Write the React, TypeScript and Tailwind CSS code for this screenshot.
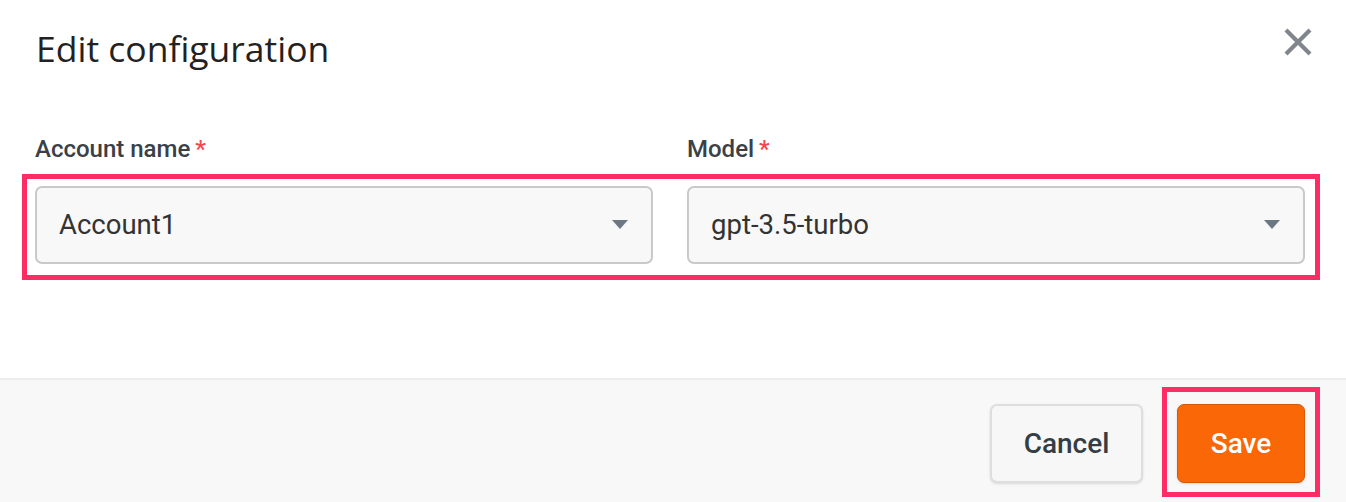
function Caret() {
  return (
    <svg width="16" height="9" viewBox="0 0 16 9" className="shrink-0">
      <path d="M0 0 L16 0 L8 9 Z" fill="#6b7883" />
    </svg>
  );
}

function CloseIcon() {
  return (
    <svg width="28" height="28" viewBox="0 0 28 28" className="shrink-0">
      <path
        d="M2 2 L26 26 M26 2 L2 26"
        stroke="#80868b"
        strokeWidth="4.2"
        strokeLinecap="butt"
      />
    </svg>
  );
}

function SelectBox({ value }: { value: string }) {
  return (
    <div className="flex h-[78px] items-center justify-between rounded-[7px] border-2 border-[#c9c9c9] bg-[#f8f8f8] pl-[22px] pr-[23px]">
      <span className="text-[27.5px] text-[#333333]">{value}</span>
      <Caret />
    </div>
  );
}

export default function App() {
  return (
    <div
      className="flex h-[502px] w-full flex-col bg-white"
      style={{ fontFamily: "Roboto, 'Liberation Sans', sans-serif" }}
    >
      {/* header */}
      <div className="flex items-start justify-between pl-[36px] pr-[34px] pt-[31px]">
        <h1
          className="text-[35.5px] leading-none text-[#222222]"
          style={{ fontFamily: "'Open Sans', 'Noto Sans', sans-serif" }}
        >
          Edit configuration
        </h1>
        <div className="-mt-[3px]">
          <CloseIcon />
        </div>
      </div>

      {/* body */}
      <div className="pl-[22px] pr-[26px] pt-[70px]">
        <div className="grid grid-cols-2 gap-[34px] pl-[13px] pr-[15px]">
          <label className="text-[24px] font-medium leading-none text-[#3a4047]">
            Account name<span className="ml-[5px] text-[#f4474d]">*</span>
          </label>
          <label className="text-[24px] font-medium leading-none text-[#3a4047]">
            Model<span className="ml-[5px] text-[#f4474d]">*</span>
          </label>
        </div>
        <div className="mt-[13px] grid grid-cols-2 gap-[34px] border-[5px] border-[#fe2c64] pb-[11px] pl-[8px] pr-[10px] pt-[7px]">
          <SelectBox value="Account1" />
          <SelectBox value="gpt-3.5-turbo" />
        </div>
      </div>

      {/* footer */}
      <div className="mt-auto flex h-[124px] items-start justify-end gap-[19px] border-t-2 border-[#ececec] bg-[#f8f8f8] pr-[26px] pt-[7px]">
        <button className="mt-[17px] h-[79px] w-[153px] rounded-[7px] border-2 border-[#dedede] bg-[#f7f7f7] text-[28px] font-medium text-[#343d45] shadow-sm">
          Cancel
        </button>
        <div className="border-[5px] border-[#fe2c64] px-[10px] pb-[9px] pt-[12px]">
          <button className="h-[79px] w-[128px] rounded-[7px] border border-[#d35a0c] bg-[#f96706] text-[28px] font-medium text-white shadow-sm">
            Save
          </button>
        </div>
      </div>
    </div>
  );
}
